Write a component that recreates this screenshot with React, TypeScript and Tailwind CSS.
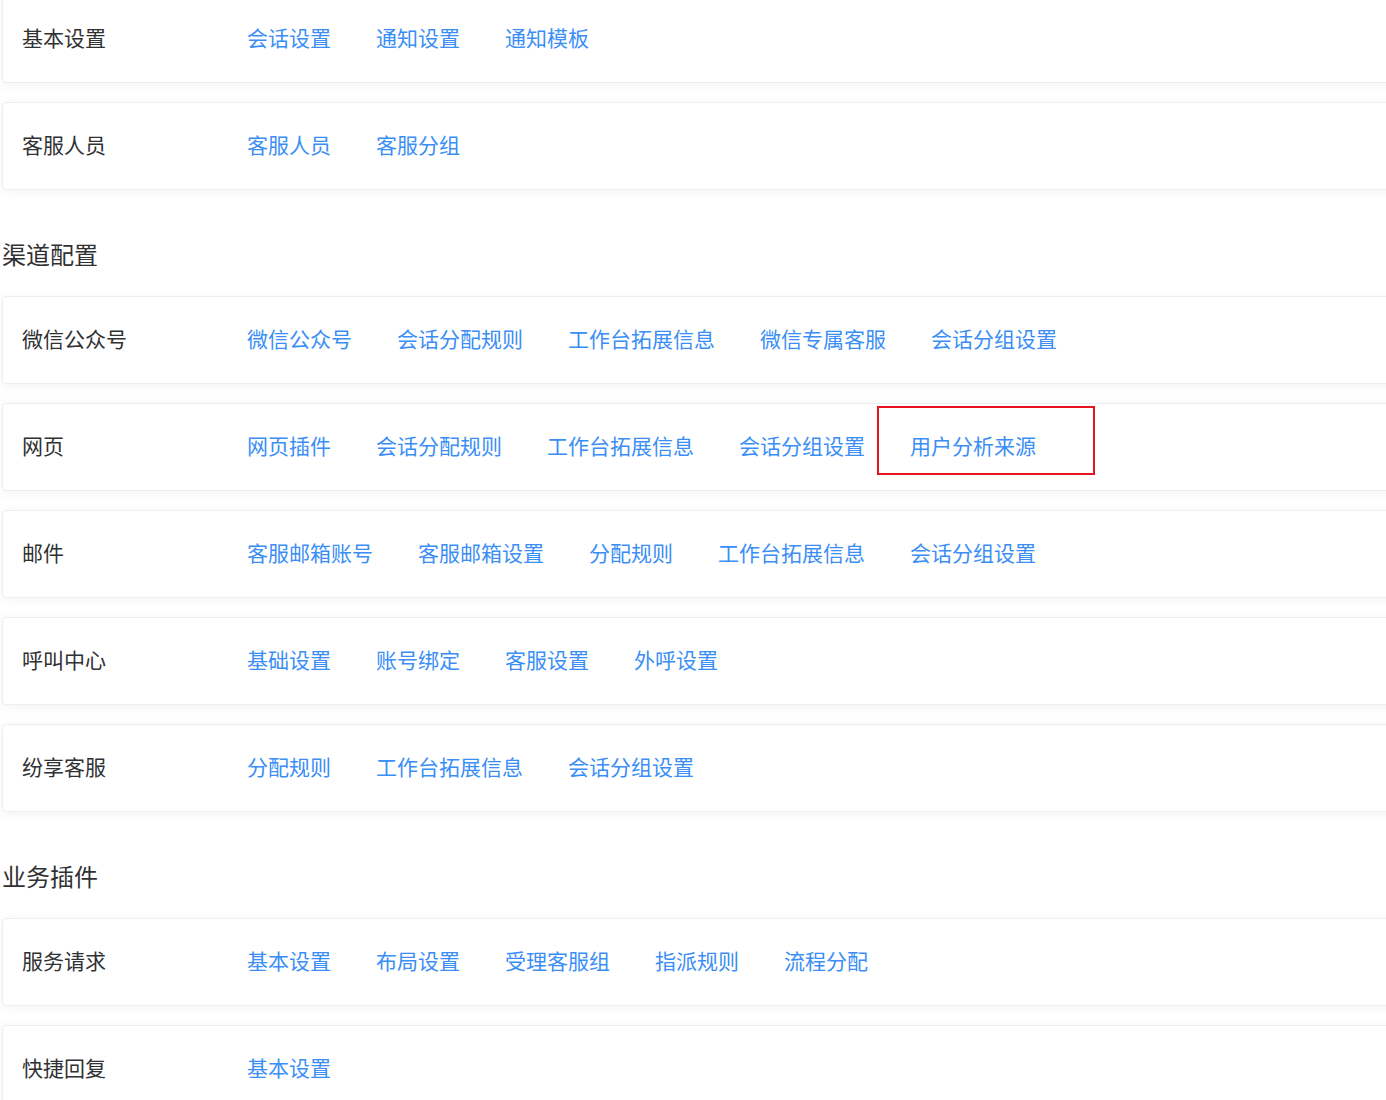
import React from 'react';

type Row = { label: string; links: string[]; marked?: string };

const basicRows: Row[] = [
  { label: '基本设置', links: ['会话设置', '通知设置', '通知模板'] },
  { label: '客服人员', links: ['客服人员', '客服分组'] },
];

const channelRows: Row[] = [
  { label: '微信公众号', links: ['微信公众号', '会话分配规则', '工作台拓展信息', '微信专属客服', '会话分组设置'] },
  { label: '网页', links: ['网页插件', '会话分配规则', '工作台拓展信息', '会话分组设置', '用户分析来源'], marked: '用户分析来源' },
  { label: '邮件', links: ['客服邮箱账号', '客服邮箱设置', '分配规则', '工作台拓展信息', '会话分组设置'] },
  { label: '呼叫中心', links: ['基础设置', '账号绑定', '客服设置', '外呼设置'] },
  { label: '纷享客服', links: ['分配规则', '工作台拓展信息', '会话分组设置'] },
];

const pluginRows: Row[] = [
  { label: '服务请求', links: ['基本设置', '布局设置', '受理客服组', '指派规则', '流程分配'] },
  { label: '快捷回复', links: ['基本设置'] },
];

const SettingCard = ({ row }: { row: Row }) => (
  <div className="mb-[19px] ml-[2px] flex h-[88px] w-[1420px] items-center rounded-[4px] border border-[#ebeef5] bg-white pb-[4px] pl-[19px] shadow-[0_2px_12px_0_rgba(0,0,0,0.05)]">
    <div className="w-[225px] text-[21px] leading-[28px] text-[#303133]">{row.label}</div>
    <div className="flex items-center gap-[45px]">
      {row.links.map((link) => (
        <span key={link} className="relative cursor-pointer text-[21px] leading-[28px] text-[#3a8ef6]">
          {link}
          {row.marked === link && (
            <span className="pointer-events-none absolute -top-[25px] -bottom-[16px] -left-[33px] -right-[59px] border-2 border-[#e5141f]" />
          )}
        </span>
      ))}
    </div>
  </div>
);

const SectionTitle = ({ title }: { title: string }) => (
  <div className="pt-[29px] pb-[26px]">
    <h2 className="h-[32px] pl-[2px] text-[24px] leading-[32px] text-[#303133]">{title}</h2>
  </div>
);

export default function App() {
  return (
    <div
      className="h-[1100px] w-full overflow-hidden bg-white"
      style={{ fontFamily: '"Noto Sans CJK SC", "Noto Sans", sans-serif' }}
    >
      <div className="-mt-[5px]">
        {basicRows.map((row) => (
          <SettingCard key={row.label} row={row} />
        ))}
        <SectionTitle title="渠道配置" />
        {channelRows.map((row) => (
          <SettingCard key={row.label} row={row} />
        ))}
        <SectionTitle title="业务插件" />
        {pluginRows.map((row) => (
          <SettingCard key={row.label} row={row} />
        ))}
      </div>
    </div>
  );
}
